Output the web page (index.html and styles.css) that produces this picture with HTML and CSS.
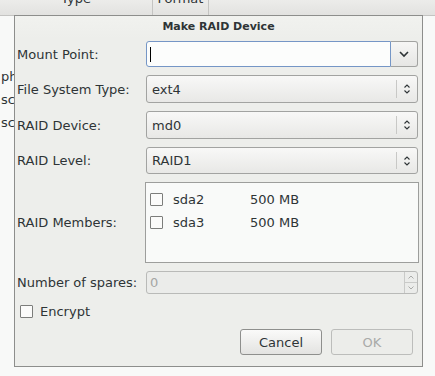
FILE: index.html
```html
<!DOCTYPE html>
<html lang="en">
<head>
  <meta charset="UTF-8">
  <title>Make RAID Device</title>
  <link rel="stylesheet" href="styles.css">
</head>
<body>
  <div class="window">
    <div class="list-header">
      <div class="col col-type"><span>Type</span></div>
      <div class="col col-format"><span>Format</span></div>
      <div class="col col-rest"></div>
    </div>
    <div class="list-body">
      <div class="list-row">ph</div>
      <div class="list-row">sc</div>
      <div class="list-row">sc</div>
    </div>
  </div>

  <div class="dialog">
    <div class="dialog-title">Make RAID Device</div>

    <div class="form-grid">
      <label class="form-label">Mount Point:</label>
      <div class="combo-entry">
        <div class="entry"><span class="caret"></span></div>
        <div class="entry-btn">
          <svg width="12" height="8" viewBox="0 0 12 8"><path d="M2 2 L6 6 L10 2" fill="none" stroke="#2e3436" stroke-width="1.6"/></svg>
        </div>
      </div>

      <label class="form-label">File System Type:</label>
      <div class="combo">
        <span class="combo-text">ext4</span>
        <span class="combo-sep"></span>
        <svg class="updown" width="8" height="12" viewBox="0 0 8 12"><path d="M1.5 4.5 L4 2 L6.5 4.5 M1.5 7.5 L4 10 L6.5 7.5" fill="none" stroke="#2e3436" stroke-width="1.1"/></svg>
      </div>

      <label class="form-label">RAID Device:</label>
      <div class="combo">
        <span class="combo-text">md0</span>
        <span class="combo-sep"></span>
        <svg class="updown" width="8" height="12" viewBox="0 0 8 12"><path d="M1.5 4.5 L4 2 L6.5 4.5 M1.5 7.5 L4 10 L6.5 7.5" fill="none" stroke="#2e3436" stroke-width="1.1"/></svg>
      </div>

      <label class="form-label">RAID Level:</label>
      <div class="combo">
        <span class="combo-text">RAID1</span>
        <span class="combo-sep"></span>
        <svg class="updown" width="8" height="12" viewBox="0 0 8 12"><path d="M1.5 4.5 L4 2 L6.5 4.5 M1.5 7.5 L4 10 L6.5 7.5" fill="none" stroke="#2e3436" stroke-width="1.1"/></svg>
      </div>

      <label class="form-label">RAID Members:</label>
      <div class="members">
        <div class="member">
          <span class="check"></span>
          <span class="member-name">sda2</span>
          <span class="member-size">500 MB</span>
        </div>
        <div class="member">
          <span class="check"></span>
          <span class="member-name">sda3</span>
          <span class="member-size">500 MB</span>
        </div>
      </div>

      <label class="form-label">Number of spares:</label>
      <div class="spin">
        <span class="spin-text">0</span>
        <div class="spin-btns">
          <div class="spin-btn">
            <svg width="8" height="6" viewBox="0 0 8 6"><path d="M1.5 4.5 L4 2 L6.5 4.5" fill="none" stroke="#a9aaa8" stroke-width="1"/></svg>
          </div>
          <div class="spin-btn">
            <svg width="8" height="6" viewBox="0 0 8 6"><path d="M1.5 1.5 L4 4 L6.5 1.5" fill="none" stroke="#a9aaa8" stroke-width="1"/></svg>
          </div>
        </div>
      </div>
    </div>

    <div class="encrypt">
      <span class="check"></span>
      <span>Encrypt</span>
    </div>

    <div class="actions">
      <button class="btn">Cancel</button>
      <button class="btn" disabled>OK</button>
    </div>
  </div>
</body>
</html>
```

FILE: styles.css
```css
* {
  margin: 0;
  padding: 0;
  box-sizing: border-box;
}

body {
  font-family: "DejaVu Sans", sans-serif;
  font-size: 13px;
  color: #2e3436;
  background-color: #f8f9f8;
  width: 435px;
  height: 376px;
  overflow: hidden;
  position: relative;
}

/* window behind the dialog */
.list-header {
  display: flex;
  height: 16px;
  background: linear-gradient(#ececea, #e2e2e0);
  border-bottom: 1px solid #c4c4c2;
  overflow: hidden;
}

.col {
  border-right: 1px solid #c4c4c2;
  text-align: center;
  line-height: 15px;
}

.col span {
  display: block;
  margin-top: -9px;
}

.col-type {
  width: 153px;
}

.col-format {
  width: 56px;
}

.col-rest {
  flex: 1;
  border-right: none;
}

.list-body {
  padding-top: 49px;
}

.list-row {
  height: 23px;
  line-height: 23px;
  padding-left: 1px;
}

/* dialog */
.dialog {
  position: absolute;
  left: 14px;
  top: 15px;
  width: 409px;
  height: 352px;
  background-color: #edeeeb;
  border: 1px solid #8d8e8c;
  padding: 0 4px 0 2px;
}

.dialog-title {
  height: 22px;
  line-height: 22px;
  text-align: center;
  font-size: 11px;
  font-weight: bold;
  margin: 0 -4px 0 -2px;
  background: linear-gradient(#f1f2ef, #edeeeb);
}

.form-grid {
  display: grid;
  grid-template-columns: 129px 1fr;
  grid-template-rows: 26px 28px 28px 27px 81px 23px;
  row-gap: 8px;
  align-items: center;
  margin-top: 3px;
}

.form-label {
  white-space: nowrap;
}

.combo-entry {
  display: flex;
  height: 26px;
}

.entry {
  flex: 1;
  background-color: #fcfdfc;
  border: 1px solid #7596c6;
  border-radius: 3px 0 0 3px;
  display: flex;
  align-items: center;
  padding-left: 3px;
}

.caret {
  width: 1px;
  height: 15px;
  background-color: #000;
}

.entry-btn {
  width: 27px;
  border: 1px solid #a2a3a1;
  border-left: none;
  border-radius: 0 3px 3px 0;
  background: linear-gradient(#f6f6f5, #e6e6e4);
  display: flex;
  align-items: center;
  justify-content: center;
}

.combo {
  height: 100%;
  display: flex;
  align-items: center;
  border: 1px solid #a2a3a1;
  border-radius: 3px;
  background: linear-gradient(#f8f8f7, #e8e8e6);
  padding-left: 5px;
}

.combo-text {
  flex: 1;
}

.combo-sep {
  width: 1px;
  align-self: stretch;
  margin: 4px 0;
  background-color: #c8c8c6;
}

.updown {
  margin: 0 6px 0 6px;
}

.members {
  height: 100%;
  margin-right: -1px;
  margin-left: -1px;
  background-color: #f9faf9;
  border: 1px solid #9d9e9c;
  padding-top: 5px;
}

.member {
  display: flex;
  align-items: center;
  height: 23px;
  padding-left: 4px;
}

.check {
  width: 13px;
  height: 13px;
  border: 1px solid #7c7d7b;
  border-radius: 1px;
  background-color: #fbfbfa;
  flex-shrink: 0;
}

.member-name {
  width: 77px;
  margin-left: 10px;
}

.spin {
  height: 100%;
  display: flex;
  border: 1px solid #b9bab8;
  border-radius: 3px;
  background-color: #ebecea;
  color: #a5a6a4;
}

.spin-text {
  flex: 1;
  line-height: 21px;
  padding-left: 3px;
}

.spin-btns {
  width: 13px;
  border-left: 1px solid #c9cac8;
  display: flex;
  flex-direction: column;
}

.spin-btn {
  flex: 1;
  display: flex;
  align-items: center;
  justify-content: center;
}

.spin-btn + .spin-btn {
  border-top: 1px solid #c9cac8;
}

.encrypt {
  display: flex;
  align-items: center;
  gap: 7px;
  height: 18px;
  margin-top: 8px;
  padding-left: 3px;
}

.actions {
  display: flex;
  justify-content: flex-end;
  gap: 9px;
  margin-top: 9px;
  padding-right: 5px;
}

.btn {
  width: 82px;
  height: 26px;
  font-family: "DejaVu Sans", sans-serif;
  font-size: 13px;
  color: #2e3436;
  border: 1px solid #8e8f8d;
  border-radius: 3px;
  background: linear-gradient(#fafaf9, #e3e3e1);
}

.btn:disabled {
  color: #a9aaa8;
  border-color: #bcbdbb;
  background: #ecedea;
}
```
